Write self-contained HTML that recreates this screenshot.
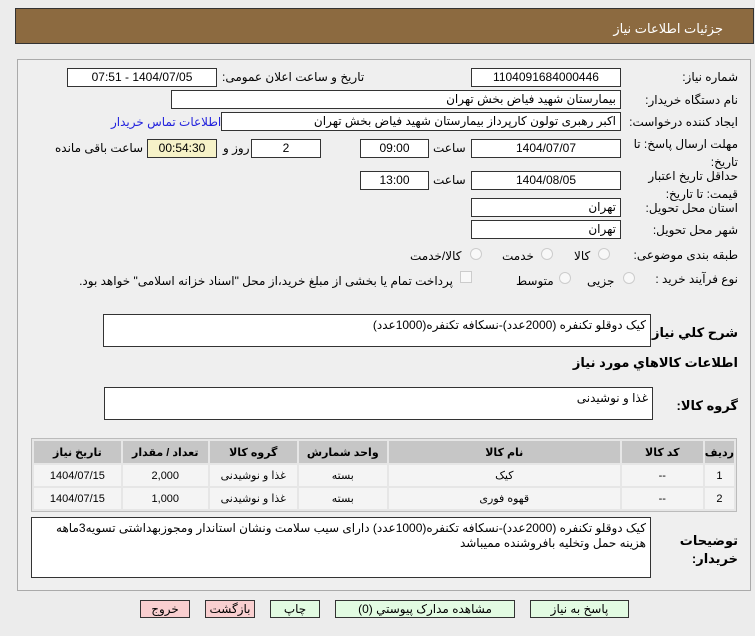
<!DOCTYPE html>
<html><head><meta charset="utf-8"><style>
*{box-sizing:border-box;margin:0;padding:0}
body{width:755px;height:636px;background:#ececec;font-family:"Liberation Sans","DejaVu Sans",sans-serif;font-size:12px;color:#000;position:relative;overflow:hidden}
.a{position:absolute}
.hdr{left:15px;top:8px;width:739px;height:36px;background:#8c6a40;border:1px solid #333;color:#fff;text-align:right;padding:12px 30px 0 0;font-size:13px}
.panel{left:17px;top:59px;width:734px;height:532px;border:1px solid #aaa;background:#efefef}
.f{position:absolute;background:#fff;border:1px solid #333;height:19px;line-height:17px;font-size:12px;direction:rtl;padding:0 4px;white-space:nowrap}
.c{text-align:center}
.l{position:absolute;direction:rtl;white-space:nowrap;font-size:12px}
.r{position:absolute;width:12px;height:12px;border-radius:50%;border:1px solid #ccc;background:#f8f8f8}
table{border-collapse:separate;border-spacing:2px;font-size:11px}
td{text-align:center;height:21px;background:#f4f4f4}
th{background:#c6c6c6;height:22px;font-weight:bold}
.b{position:absolute;top:600px;height:18px;border:1px solid #333;text-align:center;line-height:16px;font-size:12px}
.g{background:#e2fbe2}.p{background:#f9cfd0}
</style></head><body>
<div class="a hdr">جزئیات اطلاعات نیاز</div>
<div class="a panel"></div>

<div class="l" style="right:17px;top:70px">شماره نیاز:</div>
<div class="f c" style="left:471px;top:68px;width:150px">1104091684000446</div>
<div class="l" style="left:222px;top:70px">تاریخ و ساعت اعلان عمومی:</div>
<div class="f c" style="left:67px;top:68px;width:150px">1404/07/05 - 07:51</div>

<div class="l" style="right:17px;top:93px">نام دستگاه خریدار:</div>
<div class="f" style="left:171px;top:90px;width:450px">بیمارستان شهید فیاض بخش تهران</div>

<div class="l" style="right:17px;top:115px">ایجاد کننده درخواست:</div>
<div class="f" style="left:221px;top:112px;width:400px">اکبر رهبری تولون کارپرداز بیمارستان شهید فیاض بخش تهران</div>
<div class="l" style="left:111px;top:115px;color:#2222dd">اطلاعات تماس خریدار</div>

<div class="l" style="right:17px;top:135px;line-height:18px;text-align:right">مهلت ارسال پاسخ: تا<br>تاریخ:</div>
<div class="f c" style="left:471px;top:139px;width:150px">1404/07/07</div>
<div class="l" style="left:433px;top:141px">ساعت</div>
<div class="f c" style="left:360px;top:139px;width:69px">09:00</div>
<div class="f c" style="left:251px;top:139px;width:70px">2</div>
<div class="l" style="left:223px;top:141px">روز و</div>
<div class="f c" style="left:147px;top:139px;width:70px;background:#f6f2c8">00:54:30</div>
<div class="l" style="left:55px;top:141px">ساعت باقی مانده</div>

<div class="l" style="right:17px;top:167px;line-height:18px;text-align:right">حداقل تاریخ اعتبار<br>قیمت: تا تاریخ:</div>
<div class="f c" style="left:471px;top:171px;width:150px">1404/08/05</div>
<div class="l" style="left:433px;top:173px">ساعت</div>
<div class="f c" style="left:360px;top:171px;width:69px">13:00</div>

<div class="l" style="right:17px;top:201px">استان محل تحویل:</div>
<div class="f" style="left:471px;top:198px;width:150px">تهران</div>
<div class="l" style="right:17px;top:223px">شهر محل تحویل:</div>
<div class="f" style="left:471px;top:220px;width:150px">تهران</div>

<div class="l" style="right:17px;top:248px">طبقه بندی موضوعی:</div>
<div class="r" style="left:598px;top:248px"></div><div class="l" style="left:574px;top:249px">کالا</div>
<div class="r" style="left:541px;top:248px"></div><div class="l" style="left:502px;top:249px">خدمت</div>
<div class="r" style="left:470px;top:248px"></div><div class="l" style="left:410px;top:249px">کالا/خدمت</div>

<div class="l" style="right:17px;top:272px">نوع فرآیند خرید :</div>
<div class="r" style="left:623px;top:272px"></div><div class="l" style="left:587px;top:274px">جزیی</div>
<div class="r" style="left:559px;top:272px"></div><div class="l" style="left:516px;top:274px">متوسط</div>
<div class="a" style="left:460px;top:271px;width:12px;height:12px;border:1px solid #ccc;background:#f8f8f8"></div>
<div class="l" style="left:67px;top:274px;width:386px;text-align:right">پرداخت تمام یا بخشی از مبلغ خرید،از محل "اسناد خزانه اسلامی" خواهد بود.</div>

<div class="l" style="right:17px;top:325px;font-weight:bold;font-size:13px">شرح کلي نياز:</div>
<div class="f" style="left:103px;top:314px;width:548px;height:33px;line-height:20px">کیک دوقلو تکنفره (2000عدد)-نسکافه تکنفره(1000عدد)</div>
<div class="l" style="right:17px;top:355px;font-weight:bold;font-size:13px">اطلاعات کالاهاي مورد نياز</div>
<div class="l" style="right:17px;top:398px;font-weight:bold;font-size:13px">گروه کالا:</div>
<div class="f" style="left:104px;top:387px;width:549px;height:33px;line-height:20px">غذا و نوشیدنی</div>

<div class="a" style="left:31px;top:438px;width:706px;height:74px;border:1px solid #bbb;background:#e6e6e6">
<table dir="rtl" style="width:704px">
<tr><th style="width:28px">ردیف</th><th style="width:81px">کد کالا</th><th style="width:231px">نام کالا</th><th style="width:88px">واحد شمارش</th><th style="width:87px">گروه کالا</th><th style="width:85px">تعداد / مقدار</th><th>تاریخ نیاز</th></tr>
<tr><td>1</td><td>--</td><td>کیک</td><td>بسته</td><td>غذا و نوشیدنی</td><td>2,000</td><td>1404/07/15</td></tr>
<tr><td>2</td><td>--</td><td>قهوه فوری</td><td>بسته</td><td>غذا و نوشیدنی</td><td>1,000</td><td>1404/07/15</td></tr>
</table></div>

<div class="l" style="right:17px;top:532px;font-weight:bold;font-size:13px;line-height:18px;text-align:right">توضیحات<br>خریدار:</div>
<div class="f" style="left:31px;top:517px;width:620px;height:61px;line-height:15px;white-space:normal;padding-top:3px">کیک دوقلو تکنفره (2000عدد)-نسکافه تکنفره(1000عدد) دارای سیب سلامت ونشان استاندار ومجوزبهداشتی تسویه3ماهه هزینه حمل وتخلیه بافروشنده ممیباشد</div>

<div class="b p" style="left:140px;width:50px">خروج</div>
<div class="b p" style="left:205px;width:50px">بازگشت</div>
<div class="b g" style="left:270px;width:50px">چاپ</div>
<div class="b g" style="left:335px;width:180px">مشاهده مدارک پیوستي (0)</div>
<div class="b g" style="left:530px;width:99px">پاسخ به نیاز</div>
</body></html>
